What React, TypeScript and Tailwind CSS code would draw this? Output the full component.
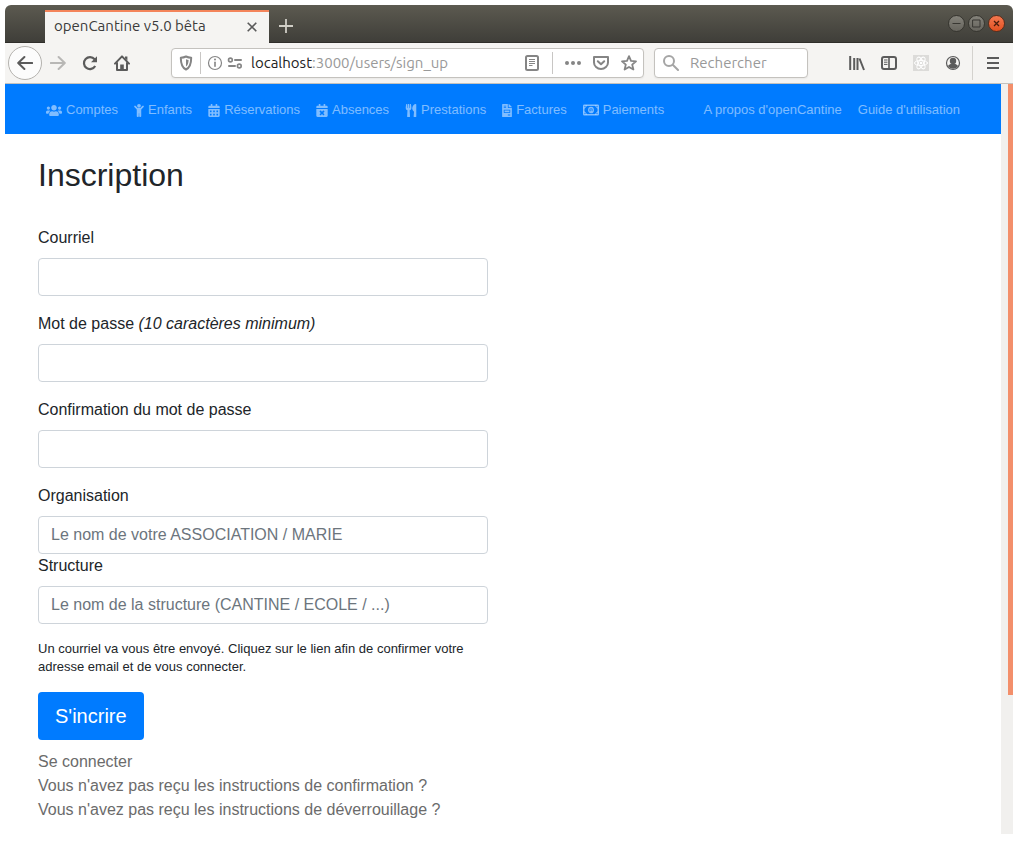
import React from "react";
import {
  FaUsers,
  FaChild,
  FaCalendarAlt,
  FaCalendarTimes,
  FaUtensils,
  FaFileInvoice,
} from "react-icons/fa";

const line = {
  fill: "none",
  stroke: "currentColor",
  strokeWidth: 2,
  strokeLinecap: "round" as const,
  strokeLinejoin: "round" as const,
};

function Icon({ children, className = "" }: { children: React.ReactNode; className?: string }) {
  return (
    <svg viewBox="0 0 16 16" className={`size-4 shrink-0 ${className}`} aria-hidden="true" {...line}>
      {children}
    </svg>
  );
}

function Banknote() {
  return (
    <svg viewBox="0 0 16 12" className="h-3 w-4 shrink-0" aria-hidden="true" {...line} strokeWidth={1.5}>
      <rect x=".75" y="1.250" width="14.500" height="9.500" rx=".6" />
      <path d="M1 4c1.300 0 2.200-1 2.200-2.300M15 4c-1.300 0-2.200-1-2.200-2.300M1 8c1.300 0 2.200 1 2.200 2.300M15 8c-1.300 0-2.200 1-2.200 2.300" strokeWidth={1} />
      <ellipse cx="8" cy="6" rx="2.300" ry="2.700" strokeWidth={1.3} />
      <path d="M7.600 5l.6-.3v2.600M7.400 7.300h1.500" strokeWidth={0.8} />
    </svg>
  );
}

const menu = [
  { label: "Comptes", icon: <FaUsers className="h-[13px] w-4" /> },
  { label: "Enfants", icon: <FaChild className="h-[13px] w-[10px]" /> },
  { label: "Réservations", icon: <FaCalendarAlt className="h-[13px] w-3" /> },
  { label: "Absences", icon: <FaCalendarTimes className="h-[13px] w-3" /> },
  { label: "Prestations", icon: <FaUtensils className="h-[13px] w-3" /> },
  { label: "Factures", icon: <FaFileInvoice className="h-[13px] w-[10px]" /> },
  { label: "Paiements", icon: <Banknote /> },
];

const windowButton =
  "flex size-[17px] items-center justify-center rounded-full border border-[#36352f] bg-linear-to-b from-[#84827a] to-[#66645d] text-[#383732]";

function TitleBar() {
  return (
    <header className="flex h-[38px] rounded-t-md border-b border-[#2f2e2a] bg-linear-to-b from-[#5c5a50] to-[#3f3e39]">
      <div className="ml-10 mt-[5px] -mb-px flex w-[224px] items-center justify-between border-t-2 border-[#f4845a] bg-[#f5f4f2] pb-[2px] pl-[9px] pr-3 text-[#3b3b3b]">
        <span className="text-[15px] whitespace-nowrap">openCantine v5.0 bêta</span>
        <button aria-label="Fermer l'onglet" className="text-[#5a5a5a]">
          <svg viewBox="0 0 10 10" className="size-[10px]" {...line} strokeWidth={1.6} strokeLinecap="butt">
            <path d="M.7.7l8.6 8.6M9.3.7L.7 9.3" />
          </svg>
        </button>
      </div>
      <button aria-label="Nouvel onglet" className="ml-[10px] mt-1 text-[#d0cec6]">
        <svg viewBox="0 0 14 14" className="size-[14px]" {...line} strokeLinecap="butt" strokeWidth={1.8}>
          <path d="M7 0v14M0 7h14" />
        </svg>
      </button>
      <div className="ml-auto flex items-center gap-[3px] pr-2">
        <button aria-label="Réduire" className={windowButton}>
          <svg viewBox="0 0 9 9" className="size-[9px]" {...line} strokeWidth={1} strokeLinecap="butt">
            <path d="M.5 4.500h8" />
          </svg>
        </button>
        <button aria-label="Agrandir" className={windowButton}>
          <svg viewBox="0 0 9 9" className="size-[9px]" {...line} strokeWidth={1} strokeLinejoin="miter">
            <path d="M1 1h7v7H1z" />
          </svg>
        </button>
        <button
          aria-label="Fermer"
          className="flex size-[17px] items-center justify-center rounded-full border border-[#5a2d1b] bg-linear-to-b from-[#f4784f] to-[#e2501e] text-[#4a1d0c]"
        >
          <svg viewBox="0 0 9 9" className="size-[9px]" {...line} strokeWidth={1.3} strokeLinecap="butt">
            <path d="M2 2l5 5M7 2L2 7" />
          </svg>
        </button>
      </div>
    </header>
  );
}

function AddressBar() {
  return (
    <div className="ml-[41px] flex h-[30px] min-w-0 flex-1 items-center rounded-[4px] border border-[#c4c2be] bg-white px-[6px] text-[#858585] shadow-xs">
      <Icon>
        <path d="M8 1.500c2 1 3.600 1.200 5.200 1.200 0 5.600-1 9.800-5.200 11.800-4.200-2-5.200-6.200-5.200-11.800 1.600 0 3.200-.2 5.200-1.200z" />
        <path d="M8 4.300c.9.400 1.700.6 2.600.7-.1 3-.8 5.200-2.600 6.600z" fill="currentColor" stroke="none" />
      </Icon>
      <span className="mx-[6px] h-[22px] w-px bg-[#c8c6c4]" />
      <Icon>
        <circle cx="8" cy="8" r="6.500" strokeWidth={1.2} />
        <path d="M8 7.300v4" strokeWidth={1.6} />
        <circle cx="8" cy="4.600" r="1" fill="currentColor" stroke="none" />
      </Icon>
      <Icon className="ml-1">
        <circle cx="3.400" cy="5" r="1.900" strokeWidth={1.6} />
        <path d="M8 5h6M2 11h6" />
        <circle cx="12.300" cy="11" r="1.900" strokeWidth={1.6} />
      </Icon>
      <div role="textbox" aria-label="Adresse" className="ml-2 flex-1 text-[15px] whitespace-nowrap text-[#999]">
        <span className="text-[#222]">localhost</span>:3000/users/sign_up
      </div>
      <button aria-label="Mode lecture">
        <Icon>
          <rect x="2" y="1" width="12" height="14" rx="1.500" />
          <path d="M5 4.500h6M5 6.500h6M5 8.500h6M5 10.500h3.500" strokeWidth={1} strokeLinecap="butt" />
        </Icon>
      </button>
      <span className="mx-3 h-[22px] w-px bg-[#c8c6c4]" />
      <button aria-label="Actions de la page">
        <Icon>
          <g fill="currentColor" stroke="none">
            <circle cx="2" cy="8" r="2" />
            <circle cx="8" cy="8" r="2" />
            <circle cx="14" cy="8" r="2" />
          </g>
        </Icon>
      </button>
      <button aria-label="Enregistrer dans Pocket" className="ml-3">
        <Icon>
          <path d="M1 2h14v5.500a7 6.500 0 0 1-14 0z" />
          <path d="M4.800 6.200L8 9.200l3.200-3" />
        </Icon>
      </button>
      <button aria-label="Marquer cette page" className="ml-3">
        <Icon>
          <path d="M8 1.200l2 4.600 5 .5-3.800 3.300 1.200 4.900L8 11.900l-4.400 2.600 1.200-4.900L1 6.300l5-.5z" strokeWidth={1.8} />
        </Icon>
      </button>
    </div>
  );
}

function ToolBar() {
  return (
    <div className="flex h-[41px] items-center border-b border-[#c4c2be] bg-[#f5f4f2] text-[#5b5b5b]">
      <button aria-label="Page précédente" className="ml-[3px] flex size-[34px] items-center justify-center rounded-full border border-[#b4b2ae] bg-[#fcfcfc]">
        <Icon>
          <path d="M15.200 8H1.400M7.400 2L1.200 8l6.200 6" />
        </Icon>
      </button>
      <button aria-label="Page suivante" className="ml-2 text-[#b8b7b5]">
        <Icon>
          <path d="M.8 8h13.800M8.600 2l6.200 6-6.200 6" />
        </Icon>
      </button>
      <button aria-label="Actualiser" className="ml-4">
        <Icon>
          <path d="M13.200 11A6 6 0 1 1 12.600 4.200" strokeLinecap="butt" strokeWidth={2.2} />
          <path d="M15 1.200v6H9z" fill="currentColor" stroke="none" />
        </Icon>
      </button>
      <button aria-label="Accueil" className="ml-4">
        <Icon>
          <path d="M1 8.600L8 1.400l7 7.200M3 8v7h10V8" />
          <path d="M6.200 15V9.500h3.600V15zM11 1.600h2.400v4L11 3.400z" fill="currentColor" stroke="none" />
        </Icon>
      </button>
      <AddressBar />
      <form role="search" className="ml-[10px] flex h-[30px] w-[154px] items-center rounded-[4px] border border-[#c4c2be] bg-white pl-2 shadow-xs">
        <label htmlFor="recherche" aria-label="Rechercher" className="text-[#a5a5a5]">
          <Icon>
            <circle cx="6" cy="6" r="5" />
            <path d="M10 10l5 5" />
          </Icon>
        </label>
        <input id="recherche" type="search" placeholder="Rechercher" className="ml-[11px] w-full min-w-0 pr-2 text-[15px] outline-none placeholder:text-[#999]" />
      </form>
      <div className="ml-[41px] flex items-center gap-4">
        <button aria-label="Bibliothèque">
          <Icon>
            <path d="M1.200 1v14M5.200 3v12M8.500 3v12M10.500 3.500l4.500 11.500" strokeLinecap="butt" />
          </Icon>
        </button>
        <button aria-label="Panneaux latéraux">
          <Icon>
            <rect x="1" y="2" width="14" height="12" rx="2" />
            <path d="M8 2v12" strokeWidth={1.6} />
            <path d="M3 5h3.500M3 7.200h3.500M3 9.400h3.500" strokeWidth={1} strokeLinecap="butt" />
          </Icon>
        </button>
        <button aria-label="React" className="bg-[#dcdbd9] text-white">
          <Icon>
            <g strokeWidth={1}>
              <ellipse cx="8" cy="8" rx="6.500" ry="2.600" />
              <ellipse cx="8" cy="8" rx="6.500" ry="2.600" transform="rotate(60 8 8)" />
              <ellipse cx="8" cy="8" rx="6.500" ry="2.600" transform="rotate(120 8 8)" />
            </g>
            <circle cx="8" cy="8" r="1.300" fill="currentColor" stroke="none" />
          </Icon>
        </button>
        <button aria-label="Compte">
          <Icon>
            <circle cx="8" cy="8" r="6.500" strokeWidth={1.2} />
            <g fill="currentColor" stroke="none">
              <circle cx="8" cy="6" r="3.200" />
              <path d="M3 11c1-1.600 2.400-2 3.200-2h3.600c.8 0 2.200.4 3.200 2-1 1.800-3 2.700-5 2.700S4 12.800 3 11z" />
            </g>
          </Icon>
        </button>
      </div>
      <span className="ml-[11px] h-[34px] w-px bg-[#d4d2ce]" />
      <button aria-label="Menu" className="ml-3 mr-[12px]">
        <Icon>
          <path d="M2 3h12M2 8h12M2 13h12" strokeLinecap="butt" />
        </Icon>
      </button>
    </div>
  );
}

function Field({
  id,
  label,
  type = "text",
  placeholder,
}: {
  id: string;
  label: React.ReactNode;
  type?: string;
  placeholder?: string;
}) {
  return (
    <div className="flex flex-col gap-2">
      <label htmlFor={id}>{label}</label>
      <input
        id={id}
        type={type}
        placeholder={placeholder}
        className="h-[38px] w-full rounded-[4px] border border-[#ced4da] bg-white px-3 placeholder:text-[#6c757d]"
      />
    </div>
  );
}

export default function App() {
  return (
    <div className="flex min-h-screen flex-col bg-white pt-[5px] pr-[9px] pb-[9px] pl-[5px]">
      <div className="font-['Ubuntu','Noto_Sans',sans-serif]">
        <TitleBar />
        <ToolBar />
      </div>
      <div className="flex flex-1 font-['Liberation_Sans',Arial,sans-serif] text-base text-[#212529]">
        <div className="min-w-0 flex-1">
          <nav className="flex h-[50px] bg-[#007bff] px-[33px] pt-[2px] text-[13px] whitespace-nowrap text-white/50">
            {menu.map((m) => (
              <a key={m.label} href="#" className="flex items-center gap-1 px-2">
                {m.icon}
                {m.label}
              </a>
            ))}
            <a href="#" className="ml-auto flex items-center px-2">A propos d'openCantine</a>
            <a href="#" className="flex items-center px-2">Guide d'utilisation</a>
          </nav>
          <main className="px-[33px] pt-[22px] pb-3">
            <h1 className="text-[32px] leading-[38px]">Inscription</h1>
            <form className="mt-8 max-w-[450px]">
              <div className="flex flex-col gap-4">
                <Field id="courriel" type="email" label="Courriel" />
                <Field
                  id="mot-de-passe"
                  type="password"
                  label={
                    <>
                      Mot de passe <em>(10 caractères minimum)</em>
                    </>
                  }
                />
                <Field id="confirmation" type="password" label="Confirmation du mot de passe" />
                <div>
                  <Field id="organisation" label="Organisation" placeholder="Le nom de votre ASSOCIATION / MARIE" />
                  <Field id="structure" label="Structure" placeholder="Le nom de la structure (CANTINE / ECOLE / ...)" />
                </div>
                <p className="text-[13px] leading-[18px]">
                  Un courriel va vous être envoyé. Cliquez sur le lien afin de confirmer votre adresse email et de vous
                  connecter.
                </p>
                <button type="submit" className="h-12 self-start rounded-[4px] bg-[#007bff] px-[17px] text-xl text-white">
                  S'incrire
                </button>
              </div>
            </form>
            <div className="mt-[10px] flex flex-col items-start text-[#6b6b6b]">
              <a href="#">Se connecter</a>
              <a href="#">Vous n'avez pas reçu les instructions de confirmation ?</a>
              <a href="#">Vous n'avez pas reçu les instructions de déverrouillage ?</a>
            </div>
          </main>
        </div>
        <div className="flex w-3 flex-col items-end bg-[#f1f0ee]">
          <div className="h-[81.500%] w-[5px] bg-[#f38f6b]" />
        </div>
      </div>
    </div>
  );
}
